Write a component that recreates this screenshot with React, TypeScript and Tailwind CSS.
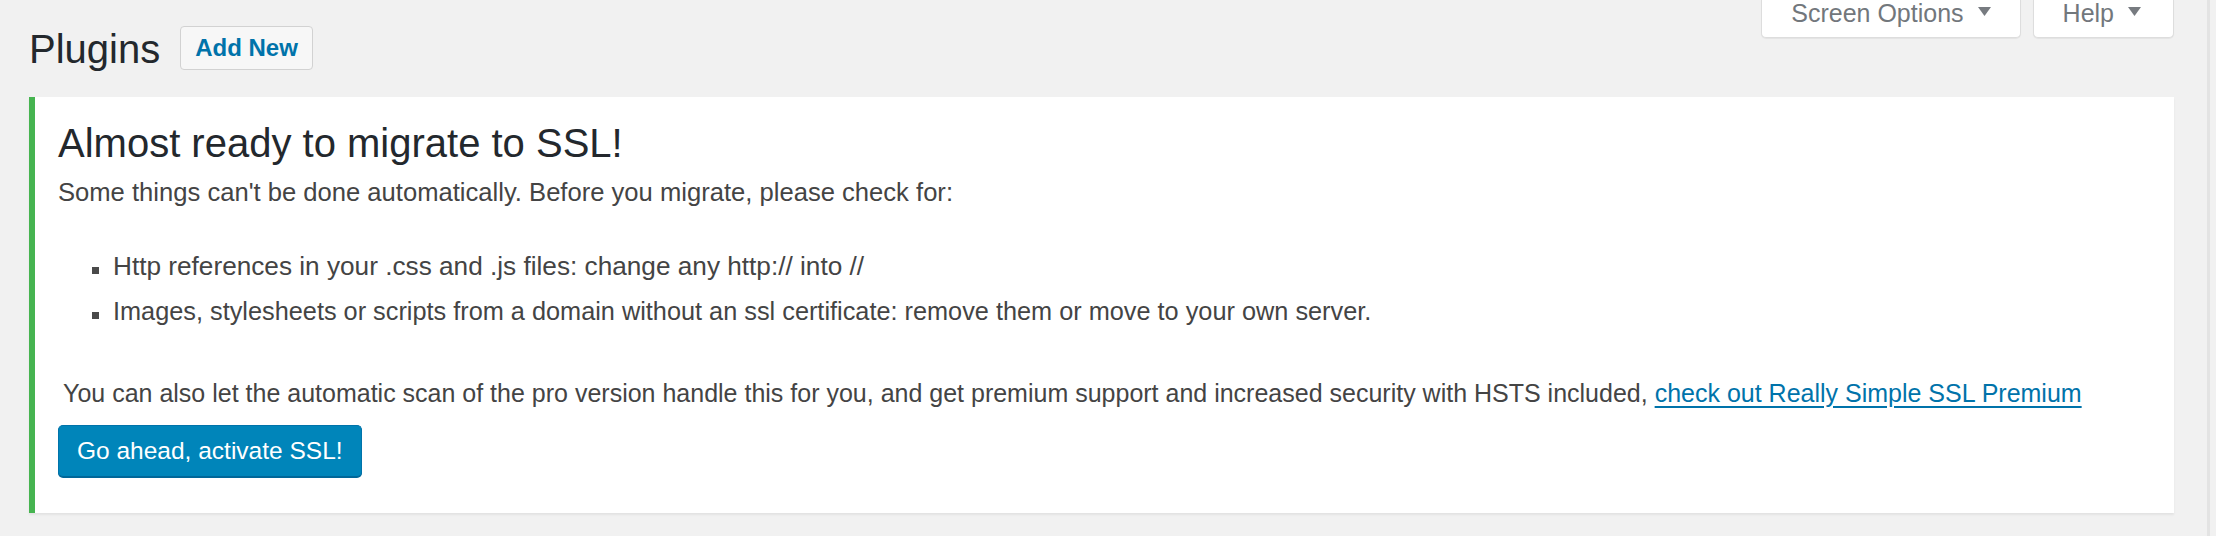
import * as React from "react";

// Dropdown tab at the top right ("Screen Options", "Help").
function MetaTab({ label, padRight }: { label: string; padRight: string }) {
  return (
    <button
      type="button"
      className={`flex h-[38px] items-start gap-[14px] rounded-b-[5px] border border-t-0 border-[#dddddd] bg-white pl-[29px] ${padRight} text-[25px] leading-[27px] text-[#72777c] shadow-[0_1px_1px_rgba(0,0,0,0.06)]`}
    >
      <span>{label}</span>
      <svg width="13" height="9" viewBox="0 0 13 9" className="mt-[7px]" aria-hidden="true">
        <polygon points="0,0 13,0 6.5,9" fill="#777b80" />
      </svg>
    </button>
  );
}

// Font sizes nudged per line so the line lengths follow the reference.
const checks = [
  {
    text: "Http references in your .css and .js files: change any http:// into //",
    size: "text-[26.2px]",
  },
  {
    text: "Images, stylesheets or scripts from a domain without an ssl certificate: remove them or move to your own server.",
    size: "text-[25.3px]",
  },
];

export default function App() {
  return (
    <div className="flex h-[536px] w-[2216px] bg-[#f1f1f1] font-['Liberation_Sans',Arial,sans-serif] text-[#444444]">
      <div className="w-[2174px] shrink-0 pl-[29px]">
        {/* Page header */}
        <div className="flex h-[97px] items-start justify-between">
          <div className="flex items-start gap-[20px] pt-[26px]">
            <h1 className="text-[40px] leading-[46px] font-normal text-[#23282d]">Plugins</h1>
            <a
              href="#"
              className="rounded-[4px] border border-[#d2d2d2] bg-[#f7f7f7] px-[14px] py-[6px] text-[24px] leading-[30px] font-bold text-[#0073aa]"
            >
              Add New
            </a>
          </div>
          <div className="flex gap-[12px]">
            <MetaTab label="Screen Options" padRight="pr-[29px]" />
            <MetaTab label="Help" padRight="pr-[32px]" />
          </div>
        </div>

        {/* SSL notice */}
        <div className="h-[416px] border-l-[6px] border-[#46b450] bg-white pt-[21px] pl-[23px] shadow-[0_2px_2px_rgba(0,0,0,0.06)]">
          <h2 className="text-[40px] leading-[50px] font-normal text-[#23282d]">
            Almost ready to migrate to SSL!
          </h2>
          <p className="mt-[7px] text-[25.6px] leading-[34px]">
            Some things can't be done automatically. Before you migrate, please check for:
          </p>
          <ul className="mt-[40px] pl-[34px]">
            {checks.map((c) => (
              <li key={c.text} className={`mb-[11px] flex items-start gap-[14px] leading-[34px] ${c.size}`}>
                <span className="mt-[18px] h-[7px] w-[7px] shrink-0 bg-[#4a4a4a]" aria-hidden="true" />
                <span>{c.text}</span>
              </li>
            ))}
          </ul>
          <p className="mt-[48px] pl-[5px] text-[25px] leading-[34px]">
            You can also let the automatic scan of the pro version handle this for you, and get premium
            support and increased security with HSTS included,{" "}
            <a href="#" className="text-[#0073aa] underline underline-offset-[4px]">
              check out Really Simple SSL Premium
            </a>
          </p>
          <button
            type="button"
            className="mt-[15px] h-[52px] rounded-[5px] border border-[#0073aa] border-b-[#006799] bg-[#0085ba] px-[18px] text-[24.5px] leading-[50px] text-white shadow-[0_1px_0_#006799]"
          >
            Go ahead, activate SSL!
          </button>
        </div>
      </div>
      <div className="w-[33px] shrink-0" />
      <div className="w-[3px] shrink-0 bg-[#e3e3e3]" />
      <div className="w-[6px] shrink-0" />
    </div>
  );
}
